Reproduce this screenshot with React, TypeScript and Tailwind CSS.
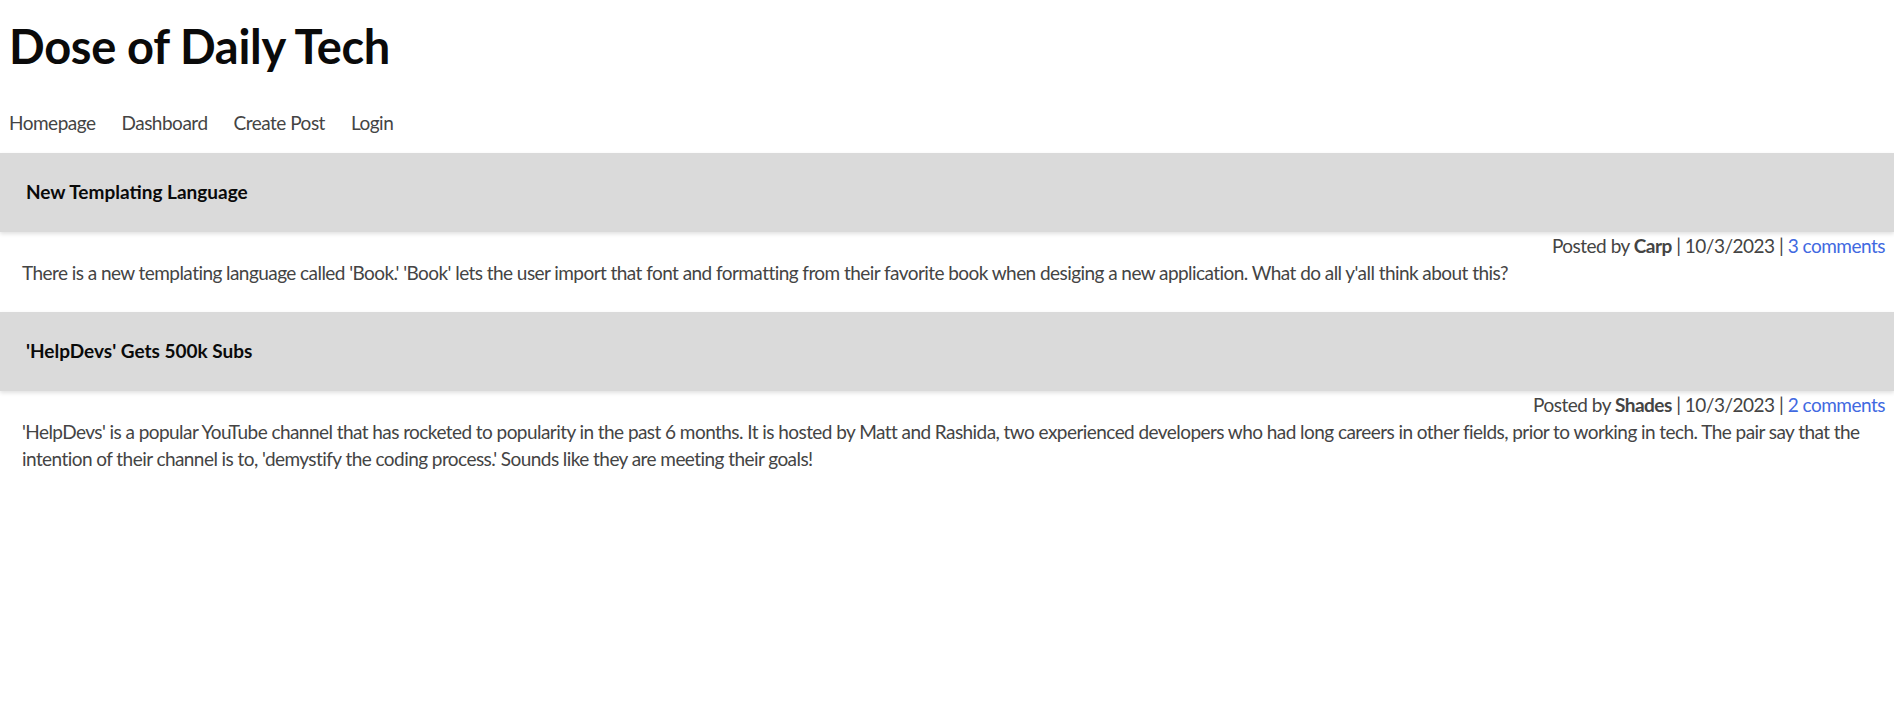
import React from "react";

const posts = [
  {
    title: "New Templating Language",
    author: "Carp",
    date: "10/3/2023",
    comments: "3 comments",
    body: "There is a new templating language called 'Book.' 'Book' lets the user import that font and formatting from their favorite book when desiging a new application. What do all y'all think about this?",
  },
  {
    title: "'HelpDevs' Gets 500k Subs",
    author: "Shades",
    date: "10/3/2023",
    comments: "2 comments",
    body: "'HelpDevs' is a popular YouTube channel that has rocketed to popularity in the past 6 months. It is hosted by Matt and Rashida, two experienced developers who had long careers in other fields, prior to working in tech. The pair say that the intention of their channel is to, 'demystify the coding process.' Sounds like they are meeting their goals!",
  },
];

export default function App() {
  return (
    <div className="min-h-screen bg-white font-['Lato',sans-serif] text-[19px] tracking-[-0.5px] text-[#444444]">
      <header className="px-[9px]">
        <h1 className="pt-[18px] text-[47px] font-bold leading-[56px] tracking-[-0.3px] text-[#0a0a0a]">
          Dose of Daily Tech
        </h1>
        <nav className="mt-[35px] flex gap-[26px] leading-[27px]">
          <a className="cursor-pointer">Homepage</a>
          <a className="cursor-pointer">Dashboard</a>
          <a className="cursor-pointer">Create Post</a>
          <a className="cursor-pointer">Login</a>
        </nav>
      </header>
      <main className="mt-[17px] flex flex-col gap-[26px]">
        {posts.map((p) => (
          <article key={p.title}>
            <div className="flex h-[79px] items-center bg-[#dadada] px-[26px] shadow-[0_2px_4px_rgba(0,0,0,0.12)]">
              <h2 className="text-[19px] font-bold tracking-normal text-[#0a0a0a]">{p.title}</h2>
            </div>
            <p className="pr-[9px] text-right leading-[27px]">
              Posted by <span className="font-bold">{p.author}</span> | {p.date} |{" "}
              <a className="cursor-pointer text-[#4169e1]">{p.comments}</a>
            </p>
            <p className="pl-[22px] pr-[4px] leading-[27px] tracking-[-0.56px]">{p.body}</p>
          </article>
        ))}
      </main>
    </div>
  );
}
